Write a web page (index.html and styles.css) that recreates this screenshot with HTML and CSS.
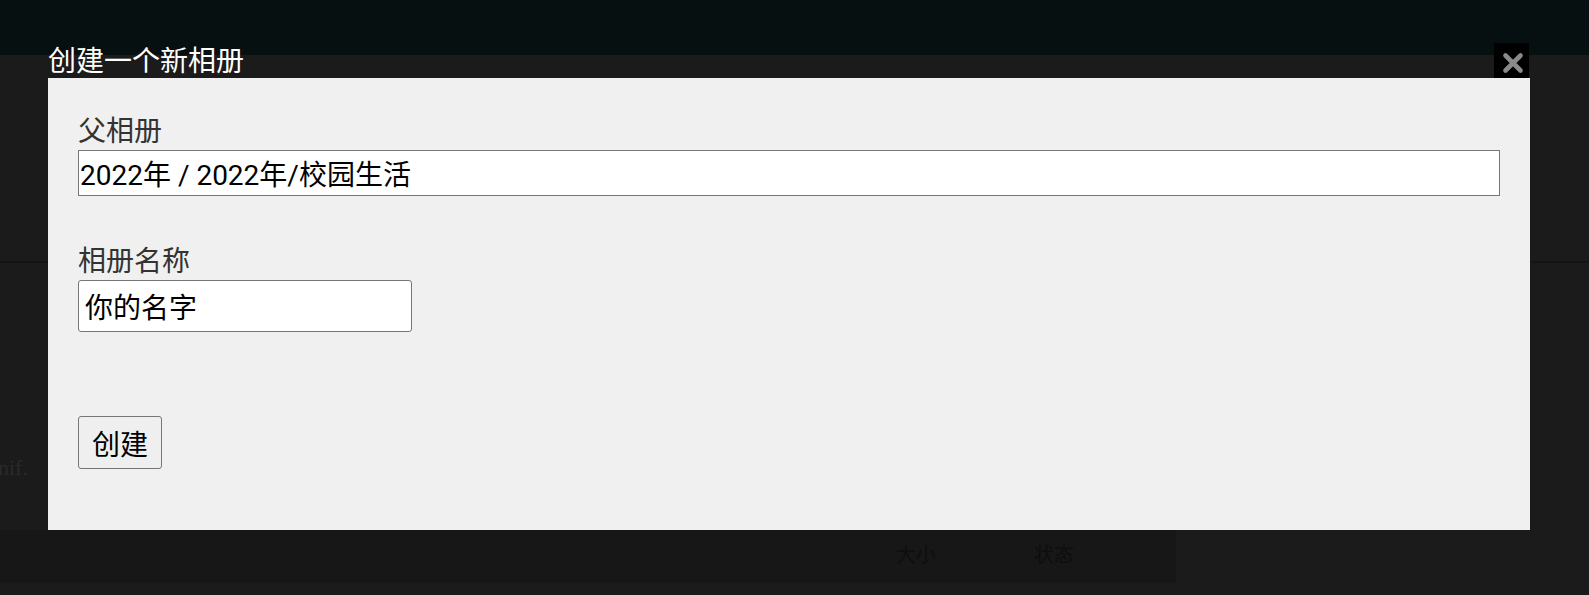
FILE: index.html
```html
<!DOCTYPE html>
<html lang="zh-CN">
<head>
<meta charset="utf-8">
<title>创建一个新相册</title>
<link rel="stylesheet" href="styles.css">
</head>
<body>
<div class="page">
  <header class="topbar"></header>
  <main class="page-body">
    <div class="rule"></div>
    <p class="note">nif.</p>
    <div class="table-head">
      <span class="col-size">大小</span>
      <span class="col-status">状态</span>
    </div>
  </main>
</div>

<div class="modal">
  <div class="modal-head">
    <h2 class="modal-title">创建一个新相册</h2>
    <button class="modal-close" type="button" aria-label="关闭">
      <svg width="35" height="35" viewBox="0 0 35 35"><path d="M11.5 12.5 L26.5 27.5 M26.5 12.5 L11.5 27.5" stroke="#8a8a8a" stroke-width="4.6" stroke-linecap="round" fill="none"/></svg>
    </button>
  </div>
  <form class="modal-body">
    <label class="field-label">父相册</label>
    <input class="field-parent" type="text" value="2022年 / 2022年/校园生活" readonly>
    <label class="field-label second">相册名称</label>
    <input class="field-name" type="text" value="你的名字">
    <button class="btn-create" type="button">创建</button>
  </form>
</div>
</body>
</html>
```

FILE: styles.css
```css
* { box-sizing: border-box; }
html, body { margin: 0; padding: 0; }
body {
  background: #1b1b1b;
  font-family: Roboto, "Noto Sans CJK SC", sans-serif;
  width: 1589px;
  height: 595px;
  overflow: hidden;
  position: relative;
}
.page { display: flex; flex-direction: column; }
.topbar { height: 55px; background: #071010; }
.page-body { display: flex; flex-direction: column; }
.rule { margin-top: 206px; height: 2px; background: #141414; }
.note {
  margin: 192px 0 0 -2px;
  height: 26px;
  font-family: "Liberation Serif", serif;
  font-size: 22px;
  line-height: 26px;
  color: #2a2a2a;
}
.table-head {
  margin-top: 49px;
  width: 1176px;
  height: 53px;
  background: #171717;
  display: flex;
  align-items: center;
  padding-bottom: 6px;
  font-size: 20px;
  color: #0e0e0e;
  font-family: "Noto Sans CJK SC", sans-serif;
}
.col-size { margin-left: 896px; }
.col-status { margin-left: 98px; }

.modal {
  position: absolute;
  left: 48px;
  top: 43px;
  width: 1482px;
  display: flex;
  flex-direction: column;
}
.modal-head {
  height: 35px;
  display: flex;
  justify-content: space-between;
  align-items: stretch;
}
.modal-title {
  margin: 0;
  font-size: 28px;
  line-height: 35px;
  font-weight: normal;
  color: #ffffff;
  position: relative;
  top: 1px;
}
.modal-close {
  width: 35px;
  height: 35px;
  margin-right: 1px;
  padding: 0;
  border: 0;
  background: #000;
  display: block;
}
.modal-close svg { display: block; }
.modal-body {
  margin: 0;
  background: #f0f0f0;
  height: 452px;
  padding: 37px 30px 0 30px;
  display: flex;
  flex-direction: column;
  align-items: flex-start;
}
.field-label {
  font-size: 28px;
  line-height: 33px;
  color: #333;
  margin-bottom: 2px;
}
.field-label.second { margin-top: 49px; }
.field-parent {
  width: 100%;
  height: 46px;
  border: 1px solid #767676;
  border-radius: 0;
  background: #fff;
  padding: 0 1px;
  font-family: Roboto, "Noto Sans CJK SC", sans-serif;
  font-size: 28px;
  color: #000;
  outline: none;
}
.field-name {
  width: 334px;
  height: 52px;
  border: 1px solid #767676;
  border-radius: 3px;
  background: #fff;
  padding: 0 6px;
  font-family: Roboto, "Noto Sans CJK SC", sans-serif;
  font-size: 28px;
  color: #000;
  outline: none;
}
.btn-create {
  margin-top: 84px;
  height: 53px;
  width: 84px;
  padding: 0;
  border: 1px solid #767676;
  border-radius: 3px;
  background: #efefef;
  font-family: Roboto, "Noto Sans CJK SC", sans-serif;
  font-size: 28px;
  color: #000;
}
```
